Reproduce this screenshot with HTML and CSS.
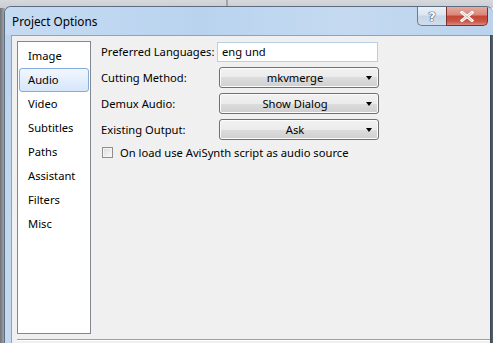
FILE: index.html
```html
<!DOCTYPE html>
<html>
<head>
<meta charset="utf-8">
<link rel="stylesheet" href="styles.css">
</head>
<body>
<div class="desktop">
  <div class="behind-top"><span class="behind-divider"></span></div>
  <div class="behind-left"></div>
  <div class="window">
    <div class="titlebar">
      <span class="title">Project Options</span>
      <div class="caption-buttons">
        <div class="cap-btn help">?</div>
        <div class="cap-btn close">
          <svg width="14" height="11" viewBox="0 0 14 11"><path d="M2 1.5 L12 9.5 M12 1.5 L2 9.5" stroke="#fff" stroke-width="3" stroke-linecap="square"/><path d="M2 1.5 L12 9.5 M12 1.5 L2 9.5" stroke="#5a2a2a" stroke-width="0.6" fill="none" opacity="0.5"/></svg>
        </div>
      </div>
    </div>
    <div class="frame">
      <div class="client">
        <div class="main">
          <ul class="nav">
            <li>Image</li>
            <li class="selected">Audio</li>
            <li>Video</li>
            <li>Subtitles</li>
            <li>Paths</li>
            <li>Assistant</li>
            <li>Filters</li>
            <li>Misc</li>
          </ul>
          <div class="page">
            <div class="form">
              <label class="lbl">Preferred Languages:</label>
              <div class="input">eng und</div>
              <label class="lbl">Cutting Method:</label>
              <div class="combo"><span>mkvmerge</span><i class="arrow"></i></div>
              <label class="lbl">Demux Audio:</label>
              <div class="combo"><span>Show Dialog</span><i class="arrow"></i></div>
              <label class="lbl">Existing Output:</label>
              <div class="combo"><span>Ask</span><i class="arrow"></i></div>
            </div>
            <div class="check-row">
              <span class="checkbox"></span>
              <span>On load use AviSynth script as audio source</span>
            </div>
          </div>
        </div>
        <div class="separator"></div>
      </div>
      <div class="right-edge"></div>
    </div>
  </div>
</div>
</body>
</html>
```

FILE: styles.css
```css
* { box-sizing: border-box; }
html, body {
  margin: 0;
  padding: 0;
  width: 493px;
  height: 343px;
  overflow: hidden;
}
body {
  font-family: "Noto Sans", "Open Sans", sans-serif;
  font-size: 11.2px;
  color: #000;
}
.desktop {
  position: relative;
  width: 493px;
  height: 343px;
  background: #f0f0f0;
}
.behind-top {
  position: absolute;
  left: 0; top: 0;
  width: 493px; height: 8px;
  background: linear-gradient(#d6d8dc, #c9ccd1);
}
.behind-divider {
  position: absolute;
  left: 226px; top: 0;
  width: 2px; height: 8px;
  background: #9fa3a8;
}
.behind-left {
  position: absolute;
  left: 0; top: 8px;
  width: 5px; height: 335px;
  background: linear-gradient(90deg, #6f7378, #a9adb2);
}
.window {
  position: absolute;
  left: 4px; top: 6px;
  width: 489px; height: 337px;
  display: flex;
  flex-direction: column;
  border-radius: 7px 7px 0 0;
  border: 1px solid #5d6d80;
  border-right: none;
  border-bottom: none;
  background: #bcd4ee;
  overflow: hidden;
}
.titlebar {
  height: 28px;
  display: flex;
  align-items: flex-start;
  justify-content: space-between;
  background: linear-gradient(90deg, #c6dbf2 0%, #b9d3ef 40%, #c5daf1 70%, #bad2ec 100%);
}
.title {
  margin: 6px 0 0 7px;
  font-size: 11.8px;
  color: #000;
}
.caption-buttons {
  display: flex;
  margin-right: 5px;
}
.cap-btn {
  height: 19px;
  display: flex;
  align-items: center;
  justify-content: center;
  border: 1px solid #6d7c8e;
  border-top: none;
}
.help {
  width: 29px;
  border-radius: 0 0 0 5px;
  border-right: none;
  background: linear-gradient(#e9f0f8 0%, #dce6f2 45%, #c7d5e6 50%, #d0dcec 100%);
  font-family: "DejaVu Sans", sans-serif;
  font-weight: bold;
  font-size: 13px;
  color: #fff;
  text-shadow: 0 0 1px #2c3e58, 0 0 1px #2c3e58, 0 0 1px #2c3e58;
}
.close {
  width: 42px;
  border-radius: 0 0 5px 0;
  background: linear-gradient(#e7a99e 0%, #d88677 45%, #c44634 50%, #c9564a 80%, #dc8a7f 100%);
  border-color: #7c3028;
}
.frame {
  flex: 1;
  display: flex;
  padding-left: 6px;
  background: linear-gradient(#bcd4ee, #c4d9ef);
}
.client {
  flex: 1;
  background: #f0f0f0;
  border-left: 1px solid #8da4bf;
  border-top: 1px solid #8da4bf;
  display: flex;
  flex-direction: column;
}
.right-edge {
  width: 3px;
  background: linear-gradient(90deg, #3a4350, #5b6573);
}
.main {
  display: flex;
  padding: 5px 0 0 5px;
}
.nav {
  list-style: none;
  margin: 0;
  padding: 1px 1px 0 1px;
  width: 74px;
  height: 293px;
  background: #fff;
  border: 1px solid #828790;
}
.nav li {
  height: 24px;
  line-height: 22px;
  padding-left: 8px;
  border: 1px solid transparent;
  border-radius: 3px;
  white-space: nowrap;
}
.nav li:first-child { margin-top: 1px; }
.nav li.selected {
  border-color: #84acdd;
  background: linear-gradient(#f2f7fe, #d6e6fb);
}
.page {
  padding: 1px 0 0 9px;
}
.form {
  display: grid;
  grid-template-columns: 118px 160px;
  row-gap: 5px;
  align-items: center;
}
.lbl {
  line-height: 20px;
  padding-left: 1px;
  white-space: nowrap;
}
.input {
  height: 20px;
  margin-left: -1px;
  padding-left: 4px;
  line-height: 18px;
  background: #fff;
  border: 1px solid #abadb3;
  border-color: #abadb3 #dbdfe6 #e3e9ef #e2e3ea;
  outline: 1px solid #b6d0e6;
  outline-offset: -1px;
}
.combo {
  position: relative;
  height: 21px;
  margin-left: 1px;
  margin-right: -1px;
  border: 1px solid #707070;
  border-radius: 3px;
  background: linear-gradient(#f2f2f2 0%, #ebebeb 50%, #dddddd 50%, #cfcfcf 100%);
  box-shadow: inset 0 0 0 1px #fcfcfc;
  display: flex;
  align-items: center;
  justify-content: center;
  padding-right: 8px;
  line-height: 19px;
  white-space: nowrap;
}
.arrow {
  position: absolute;
  right: 6px;
  top: 8px;
  width: 0; height: 0;
  border-left: 3.5px solid transparent;
  border-right: 3.5px solid transparent;
  border-top: 4px solid #000;
}
.check-row {
  display: flex;
  align-items: center;
  margin-top: 5px;
  margin-left: 2px;
  gap: 7px;
  white-space: nowrap;
}
.checkbox {
  width: 11px;
  height: 11px;
  border: 1px solid #8f8f8f;
  background: linear-gradient(135deg, #dcdcdc, #fafafa);
  box-shadow: inset 0 0 0 1px #f4f4f4;
}
.separator {
  margin: 5px 0 0 5px;
  height: 2px;
  border-top: 1px solid #a0a0a0;
  border-bottom: 1px solid #ffffff;
}
```
